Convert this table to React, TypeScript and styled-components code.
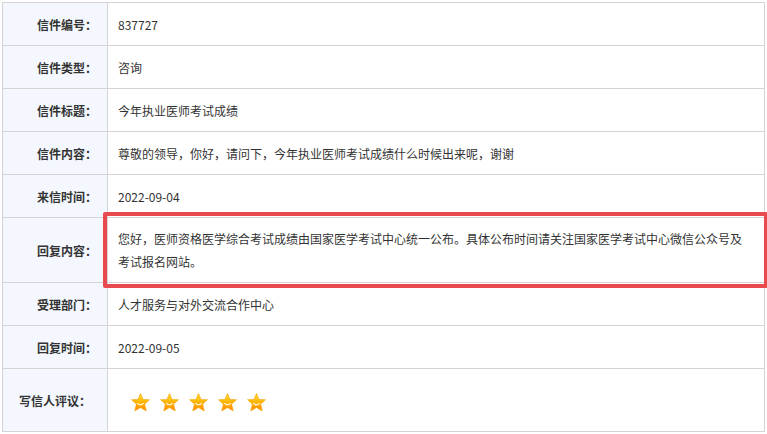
import styled, { createGlobalStyle } from "styled-components";

const GlobalStyle = createGlobalStyle`
  body {
    margin: 0;
    background: #fff;
    font-family: "Noto Sans CJK SC", "Noto Sans", sans-serif;
  }
`;

const Page = styled.div`
  padding: 2px 0 0 2px;
  width: 763px;
`;

const InfoTable = styled.table`
  width: 763px;
  border-collapse: collapse;
  table-layout: fixed;
  font-size: 12px;
  color: #333;
`;

const LabelCell = styled.th<{ $center?: boolean }>`
  width: 105px;
  box-sizing: border-box;
  border: 1px solid #d4d4d4;
  background: #f4f8fe;
  font-weight: bold;
  text-align: ${(p) => (p.$center ? "center" : "right")};
  padding: 0 ${(p) => (p.$center ? "0" : "10px")} 0 0;
  color: #333;
`;

const ValueCell = styled.td`
  position: relative;
  border: 1px solid #d4d4d4;
  padding: 0 20px 0 10px;
  line-height: 23px;
`;

const Row = styled.tr<{ $h: number }>`
  height: ${(p) => p.$h}px;
`;

const Highlight = styled.div`
  position: absolute;
  left: -5px;
  top: -6px;
  right: -4px;
  bottom: -6px;
  border: 4px solid #e84a4e;
  border-radius: 2px;
  pointer-events: none;
`;

const Stars = styled.div`
  display: flex;
  gap: 10px;
  padding-left: 13px;
  padding-top: 4px;
`;

function Star() {
  return (
    <svg width="19" height="19" viewBox="0 0 18 18">
      <defs>
        <linearGradient id="sg" x1="0" y1="0" x2="0" y2="1">
          <stop offset="0" stopColor="#ffe23a" />
          <stop offset="0.5" stopColor="#ffb400" />
          <stop offset="1" stopColor="#ff8a00" />
        </linearGradient>
      </defs>
      <path
        d="M9 0.5 L11.4 6.2 L17.5 6.4 L12.9 10.4 L14.4 17 L9 13.8 L3.6 17 L5.1 10.4 L0.5 6.4 L6.6 6.2 Z"
        fill="url(#sg)"
        stroke="#f7a000"
        strokeWidth="0.6"
        strokeLinejoin="round"
      />
      <path d="M6 9.6 Q9 12.8 12 9.6" stroke="#fff6d8" strokeWidth="1.3" fill="none" />
    </svg>
  );
}

const rows: { label: string; value: string; h: number }[] = [
  { label: "信件编号：", value: "837727", h: 43 },
  { label: "信件类型：", value: "咨询", h: 43 },
  { label: "信件标题：", value: "今年执业医师考试成绩", h: 43 },
  { label: "信件内容：", value: "尊敬的领导，你好，请问下，今年执业医师考试成绩什么时候出来呢，谢谢", h: 43 },
  { label: "来信时间：", value: "2022-09-04", h: 43 },
];

const after: { label: string; value: string; h: number }[] = [
  { label: "受理部门：", value: "人才服务与对外交流合作中心", h: 43 },
  { label: "回复时间：", value: "2022-09-05", h: 43 },
];

export default function App() {
  return (
    <Page>
      <GlobalStyle />
      <InfoTable>
        <tbody>
          {rows.map((r) => (
            <Row key={r.label} $h={r.h}>
              <LabelCell>{r.label}</LabelCell>
              <ValueCell>{r.value}</ValueCell>
            </Row>
          ))}
          <Row $h={65}>
            <LabelCell>回复内容：</LabelCell>
            <ValueCell>
              您好，医师资格医学综合考试成绩由国家医学考试中心统一公布。具体公布时间请关注国家医学考试中心微信公众号及考试报名网站。
              <Highlight />
            </ValueCell>
          </Row>
          {after.map((r) => (
            <Row key={r.label} $h={r.h}>
              <LabelCell>{r.label}</LabelCell>
              <ValueCell>{r.value}</ValueCell>
            </Row>
          ))}
          <Row $h={63}>
            <LabelCell $center>写信人评议：</LabelCell>
            <ValueCell>
              <Stars>
                {[0, 1, 2, 3, 4].map((i) => (
                  <Star key={i} />
                ))}
              </Stars>
            </ValueCell>
          </Row>
        </tbody>
      </InfoTable>
    </Page>
  );
}
